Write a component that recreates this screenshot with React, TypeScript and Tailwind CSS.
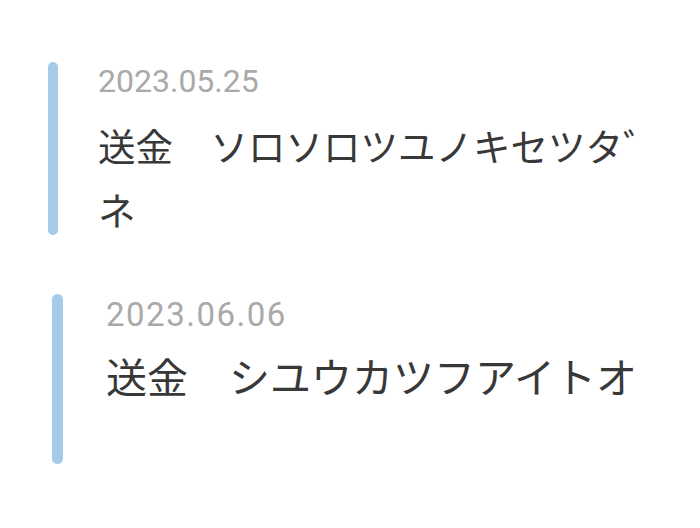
type Remittance = {
  date: string;
  label: string;
  payee: string;
};

const items: Remittance[] = [
  { date: "2023.05.25", label: "送金", payee: "ソロソロツユノキセツタ゛ネ" },
  { date: "2023.06.06", label: "送金", payee: "シユウカツフアイトオ" },
];

const jp = { fontFamily: '"Noto Sans CJK JP", "Noto Sans", sans-serif' };
const num = { fontFamily: 'Roboto, "Noto Sans", sans-serif' };

export default function App() {
  const [first, second] = items;
  return (
    <div className="min-h-[528px] w-[700px] bg-white pt-[62px] pr-[22px]">
      {/* first entry */}
      <div className="flex items-start pl-[48px]">
        <div className="h-[173px] w-[10px] shrink-0 rounded-full bg-[#a4cbea]" />
        <div className="ml-[40px] flex-1 pt-px">
          <p className="text-[32px] leading-[36px] text-[#a9a9a9]" style={num}>
            {first.date}
          </p>
          <p className="mt-[14px] text-[37.5px] leading-[64px] text-[#383838]" style={jp}>
            {first.label}
            {"\u3000"}
            {first.payee}
          </p>
        </div>
      </div>

      {/* second entry */}
      <div className="mt-[53px] flex items-start pl-[52px]">
        <div className="h-[170px] w-[11px] shrink-0 rounded-full bg-[#a4cbea]" />
        <div className="ml-[43px] flex-1 pt-[3px]">
          <p className="text-[33px] leading-[36px] tracking-[1.5px] text-[#a9a9a9]" style={num}>
            {second.date}
          </p>
          <p className="mt-[10px] text-[41px] leading-[64px] text-[#383838]" style={jp}>
            {second.label}
            {"\u3000"}
            {second.payee}
          </p>
        </div>
      </div>
    </div>
  );
}
